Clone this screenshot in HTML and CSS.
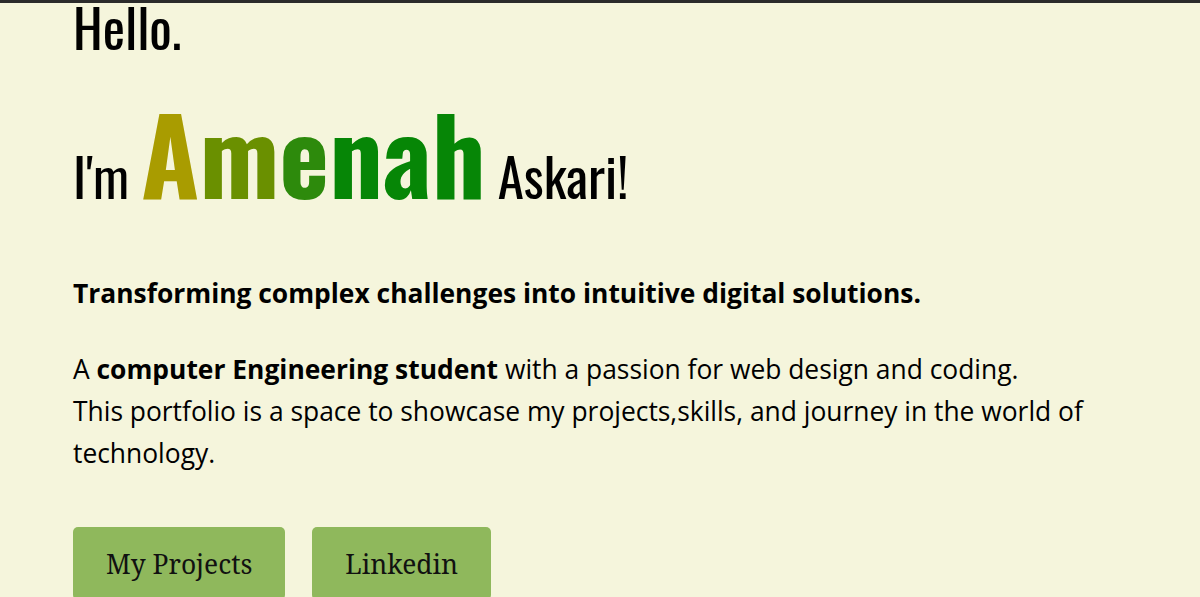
FILE: index.html
```html
<!DOCTYPE html>
<html lang="en">
<head>
<meta charset="utf-8">
<title>Amenah Askari</title>
<link rel="stylesheet" href="styles.css">
</head>
<body>
<div class="topbar"></div>
<main class="hero">
  <h1 class="hello">Hello.</h1>
  <h2 class="intro">I'm <span class="name"><span class="c1">A</span><span class="c2">m</span><span class="c3">e</span><span class="c4">nah</span></span> Askari!</h2>
  <p class="tagline">Transforming complex challenges into intuitive digital solutions.</p>
  <p class="about">A <strong>computer Engineering student</strong> with a passion for web design and coding.<br>This portfolio is a space to showcase my projects,skills, and journey in the world of technology.</p>
  <div class="actions">
    <a class="btn" href="#projects">My Projects</a>
    <a class="btn" href="#linkedin">Linkedin</a>
  </div>
</main>
</body>
</html>
```
FILE: styles.css
```css
html, body {
  margin: 0;
  padding: 0;
}
body {
  background: #f5f5dc;
  color: #000;
  font-family: "Open Sans", "Noto Sans", sans-serif;
  overflow: hidden;
}
.topbar {
  height: 3px;
  background: #2b2b2b;
}
.hero {
  padding: 0 73px;
}
.hello,
.intro {
  font-family: "Oswald", "DejaVu Sans", sans-serif;
  font-weight: 400;
  font-size: 53px;
  margin: 0;
}
.hello {
  line-height: 0.9;
}
.intro {
  line-height: 1;
  margin-top: 48.4px;
}
.name {
  font-size: 106px;
  font-weight: 700;
}
.c1 { color: #a99c00; }
.c2 { color: #6a9000; }
.c3 { color: #2d8a0c; }
.c4 { color: #068606; }
.tagline,
.about {
  font-size: 26.4px;
  line-height: 42.24px;
}
.tagline {
  font-weight: 700;
  margin: 66.8px 0 0;
}
.about {
  margin: 33.7px 0 0;
}
.about strong {
  font-weight: 700;
}
.actions {
  display: flex;
  gap: 27px;
  margin-top: 52.7px;
}
.btn {
  display: inline-block;
  background: #8fb85c;
  color: #111;
  text-decoration: none;
  font-family: "Noto Serif", "DejaVu Serif", serif;
  font-size: 26.4px;
  line-height: 36px;
  padding: 18.5px 33px;
  border-radius: 5px;
}
```
